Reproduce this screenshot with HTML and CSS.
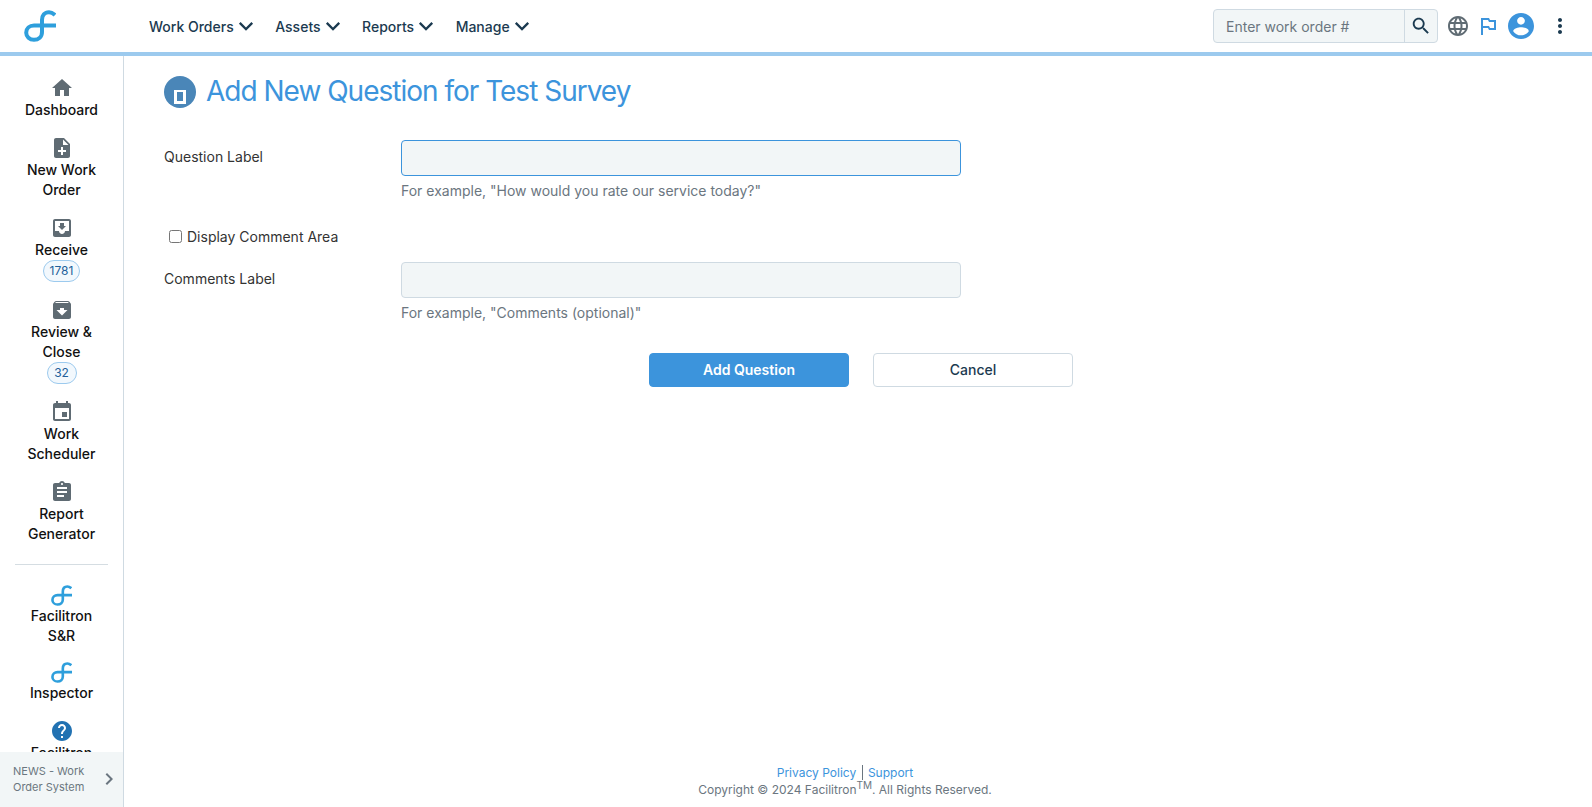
FILE: index.html
```html
<!DOCTYPE html>
<html lang="en">
<head>
    <meta charset="UTF-8">
    <title>Add New Question for Test Survey</title>
    <link rel="stylesheet" href="styles.css">
</head>
<body>
    <svg class="icon-defs" width="0" height="0">
        <symbol id="i-logo" viewBox="0 0 32 32">
            <path d="M31 5C29 3.200 27 2.200 25 2.200 20.500 2.200 18 5.500 18 10V22C18 27 14.500 29.800 10 29.800 5.500 29.800 2.200 26.500 2.200 22.700 2.200 18.500 5.500 15.500 10 15.500H32" fill="none" stroke="currentColor" stroke-width="4"/>
        </symbol>
        <symbol id="i-chevron-down" viewBox="3.500 3.500 17 17"><path d="M16.590 8.590L12 13.170 7.410 8.590 6 10l6 6 6-6z"/></symbol>
    </svg>

    <!-- Top Bar -->
    <header class="topbar">
        <a class="topbar-logo"><svg width="32" height="32"><use href="#i-logo"/></svg></a>
        <nav class="topnav">
            <a>Work Orders <svg class="caret" width="20" height="20"><use href="#i-chevron-down"/></svg></a>
            <a>Assets <svg class="caret" width="20" height="20"><use href="#i-chevron-down"/></svg></a>
            <a>Reports <svg class="caret" width="20" height="20"><use href="#i-chevron-down"/></svg></a>
            <a>Manage <svg class="caret" width="20" height="20"><use href="#i-chevron-down"/></svg></a>
        </nav>
        <div class="topbar-tools">
            <div class="search-box">
                <input type="text" placeholder="Enter work order #">
                <button type="button" aria-label="Search">
                    <svg width="22" height="22" viewBox="0 0 24 24"><path d="M15.500 14h-.79l-.28-.27C15.410 12.590 16 11.110 16 9.500 16 5.910 13.090 3 9.500 3S3 5.910 3 9.500 5.910 16 9.500 16c1.610 0 3.090-.59 4.230-1.570l.27.28v.79l5 4.990L20.490 19l-4.990-5zm-6 0C7.010 14 5 11.990 5 9.500S7.010 5 9.500 5 14 7.010 14 9.500 11.990 14 9.500 14z"/></svg>
                </button>
            </div>
            <svg class="tool-globe" width="24" height="24" viewBox="0 0 24 24"><path d="M11.990 2C6.470 2 2 6.480 2 12s4.470 10 9.990 10C17.520 22 22 17.520 22 12S17.520 2 11.990 2zm6.930 6h-2.950c-.32-1.250-.78-2.450-1.380-3.560 1.840.63 3.370 1.910 4.330 3.560zM12 4.040c.83 1.200 1.480 2.530 1.910 3.960h-3.820c.43-1.430 1.080-2.760 1.910-3.960zM4.260 14C4.100 13.360 4 12.690 4 12s.1-1.360.26-2h3.380c-.08.66-.14 1.320-.14 2 0 .68.06 1.340.14 2H4.260zm.82 2h2.950c.32 1.250.78 2.450 1.380 3.560-1.840-.63-3.370-1.900-4.330-3.560zm2.950-8H5.080c.96-1.660 2.490-2.930 4.330-3.560C8.810 5.550 8.350 6.750 8.030 8zM12 19.960c-.83-1.200-1.480-2.530-1.910-3.960h3.820c-.43 1.430-1.080 2.760-1.910 3.960zM14.340 14H9.660c-.09-.66-.16-1.320-.16-2 0-.68.07-1.350.16-2h4.680c.09.650.16 1.320.16 2 0 .68-.07 1.340-.16 2zm.25 5.560c.6-1.110 1.060-2.310 1.380-3.560h2.950c-.96 1.650-2.490 2.930-4.330 3.560zM16.360 14c.08-.66.14-1.320.14-2 0-.68-.06-1.340-.14-2h3.380c.16.64.26 1.310.26 2s-.1 1.360-.26 2h-3.380z"/></svg>
            <svg class="tool-flag" width="24" height="24" viewBox="0 0 24 24"><path d="M14 6l-1-2H5v17h2v-7h5l1 2h7V6h-6zm4 8h-4l-1-2H7V6h5l1 2h5v6z"/></svg>
            <svg class="tool-user" width="26" height="26" viewBox="2 2 20 20"><path d="M12 2C6.480 2 2 6.480 2 12s4.480 10 10 10 10-4.480 10-10S17.520 2 12 2zm0 3c1.660 0 3 1.340 3 3s-1.340 3-3 3-3-1.340-3-3 1.340-3 3-3zm0 14.200c-2.500 0-4.710-1.280-6-3.220.03-1.990 4-3.080 6-3.080 1.990 0 5.970 1.090 6 3.080-1.290 1.940-3.500 3.220-6 3.220z"/></svg>
            <svg class="tool-more" width="24" height="24" viewBox="0 0 24 24"><path d="M12 8c1.100 0 2-.9 2-2s-.9-2-2-2-2 .9-2 2 .9 2 2 2zm0 2c-1.100 0-2 .9-2 2s.9 2 2 2 2-.9 2-2-.9-2-2-2zm0 6c-1.100 0-2 .9-2 2s.9 2 2 2 2-.9 2-2-.9-2-2-2z"/></svg>
        </div>
    </header>

    <div class="layout">
        <!-- Side Menu -->
        <aside class="sidebar">
            <div class="side-scroll">
                <a class="side-item">
                    <svg width="24" height="24" viewBox="0 0 24 24"><path d="M10 20v-6h4v6h5v-8h3L12 3 2 12h3v8z"/></svg>
                    <span>Dashboard</span>
                </a>
                <a class="side-item">
                    <svg width="24" height="24" viewBox="0 0 24 24"><path d="M14 2H6c-1.100 0-1.990.9-1.990 2L4 20c0 1.100.89 2 1.990 2H18c1.100 0 2-.9 2-2V8l-6-6zm2 14h-3v3h-2v-3H8v-2h3v-3h2v3h3v2zm-3-7V3.500L18.500 9H13z"/></svg>
                    <span>New Work Order</span>
                </a>
                <a class="side-item">
                    <svg width="24" height="24" viewBox="0 0 24 24"><path d="M19 3H4.990c-1.110 0-1.980.89-1.980 2L3 19c0 1.100.88 2 1.990 2H19c1.100 0 2-.9 2-2V5c0-1.110-.9-2-2-2zm0 12h-4c0 1.660-1.350 3-3 3s-3-1.340-3-3H4.990V5H19v10zm-3-5h-2V7h-4v3H8l4 4 4-4z"/></svg>
                    <span>Receive</span>
                    <b class="count">1781</b>
                </a>
                <a class="side-item">
                    <svg width="24" height="24" viewBox="0 0 24 24"><path d="M20.540 5.230l-1.390-1.680C18.880 3.210 18.470 3 18 3H6c-.47 0-.88.21-1.160.55L3.460 5.230C3.170 5.570 3 6.020 3 6.500V19c0 1.100.9 2 2 2h14c1.100 0 2-.9 2-2V6.500c0-.48-.17-.93-.46-1.270zM12 17.500L6.500 12H10v-2h4v2h3.500L12 17.500zM5.120 5l.81-1h12l.94 1H5.120z"/></svg>
                    <span>Review &amp; Close</span>
                    <b class="count">32</b>
                </a>
                <a class="side-item">
                    <svg width="24" height="24" viewBox="0 0 24 24"><path d="M17 12h-5v5h5v-5zM16 1v2H8V1H6v2H5c-1.110 0-1.990.9-1.990 2L3 19c0 1.100.89 2 2 2h14c1.100 0 2-.9 2-2V5c0-1.100-.9-2-2-2h-1V1h-2zm3 18H5V8h14v11z"/></svg>
                    <span>Work Scheduler</span>
                </a>
                <a class="side-item">
                    <svg width="24" height="24" viewBox="0 0 24 24"><path d="M19 3h-4.180C14.400 1.840 13.300 1 12 1c-1.300 0-2.400.84-2.820 2H5c-1.100 0-2 .9-2 2v14c0 1.100.9 2 2 2h14c1.100 0 2-.9 2-2V5c0-1.100-.9-2-2-2zm-7 0c.55 0 1 .45 1 1s-.45 1-1 1-1-.45-1-1 .45-1 1-1zm2 14H7v-2h7v2zm3-4H7v-2h10v2zm0-4H7V7h10v2z"/></svg>
                    <span>Report Generator</span>
                </a>
                <hr class="side-divider">
                <a class="side-item app">
                    <svg width="21" height="21"><use href="#i-logo"/></svg>
                    <span>Facilitron S&amp;R</span>
                </a>
                <a class="side-item app">
                    <svg width="21" height="21"><use href="#i-logo"/></svg>
                    <span>Inspector</span>
                </a>
                <a class="side-item help">
                    <svg width="24" height="24" viewBox="0 0 24 24"><path d="M12 2C6.480 2 2 6.480 2 12s4.480 10 10 10 10-4.480 10-10S17.520 2 12 2zm1 17h-2v-2h2v2zm2.070-7.750l-.9.92C13.450 12.900 13 13.500 13 15h-2v-.5c0-1.100.45-2.100 1.170-2.830l1.240-1.260c.37-.36.59-.86.59-1.410 0-1.100-.9-2-2-2s-2 .9-2 2H8c0-2.210 1.790-4 4-4s4 1.790 4 4c0 .88-.36 1.680-.93 2.250z"/></svg>
                    <span>Facilitron</span>
                </a>
            </div>
            <div class="news-panel">
                <span>NEWS - Work Order System</span>
                <svg width="24" height="24" viewBox="0 0 24 24"><path d="M10 6L8.590 7.410 13.170 12l-4.580 4.590L10 18l6-6z"/></svg>
            </div>
        </aside>

        <!-- Main Content -->
        <main class="content">
            <h1 class="page-title">
                <span class="title-badge"><i></i></span>
                <span class="title-text">Add New Question for Test Survey</span>
            </h1>

            <form class="question-form">
                <div class="form-row">
                    <label for="questionLabel">Question Label</label>
                    <div class="field">
                        <input class="is-focus" id="questionLabel" type="text">
                        <p>For example, "How would you rate our service today?"</p>
                    </div>
                </div>
                <label class="check-row"><input type="checkbox"> Display Comment Area</label>
                <div class="form-row">
                    <label for="commentsLabel">Comments Label</label>
                    <div class="field">
                        <input id="commentsLabel" type="text">
                        <p>For example, "Comments (optional)"</p>
                    </div>
                </div>
                <div class="form-actions">
                    <button class="btn btn-primary" type="button">Add Question</button>
                    <button class="btn" type="button">Cancel</button>
                </div>
            </form>

            <footer class="page-footer">
                <div><a>Privacy Policy</a> <span class="sep"></span> <a>Support</a></div>
                <div class="copyright">Copyright © 2024 Facilitron<sup>TM</sup>. All Rights Reserved.</div>
            </footer>
        </main>
    </div>
</body>
</html>
```

FILE: styles.css
```css
:root {
    --color-blue: #3c94dc;
    --color-navy: #1b3a50;
    --color-icon: #5f6b73;
    --color-field: #f2f6f7;
    --color-line: #cfdae2;
    --color-muted: #6b7680;
}

* {
    box-sizing: border-box;
}

html, body {
    height: 100%;
}

body {
    margin: 0;
    display: flex;
    flex-direction: column;
    overflow: hidden;
    background: #fff;
    font-family: Inter, "Noto Sans", sans-serif;
    font-size: 14px;
    color: #333;
}

.icon-defs {
    position: absolute;
}

/* Top Bar */
.topbar {
    flex: none;
    height: 56px;
    display: flex;
    align-items: center;
    padding-left: 24px;
    border-bottom: 4px solid #9ccaee;
}

.topbar-logo {
    display: flex;
    color: #2e9fdc;
}

.topnav {
    display: flex;
    margin-left: 93px;
    gap: 19.5px;
}

.topnav a {
    display: flex;
    align-items: center;
    gap: 2px;
    font-weight: 450;
    color: var(--color-navy);
}

.caret {
    fill: var(--color-navy);
}

.topbar-tools {
    margin-left: auto;
    display: flex;
    align-items: center;
}

.search-box {
    display: flex;
    width: 225px;
    height: 34px;
    border: 1px solid var(--color-line);
    border-radius: 4px;
    background: var(--color-field);
}

.search-box input {
    flex: 1;
    min-width: 0;
    padding: 0 12px;
    border: 0;
    background: none;
    font: 14px Inter, sans-serif;
}

.search-box input::placeholder {
    color: var(--color-muted);
    opacity: 1;
}

.search-box button {
    width: 33px;
    padding: 0;
    display: flex;
    align-items: center;
    justify-content: center;
    border: 0;
    border-left: 1px solid var(--color-line);
    background: none;
    fill: var(--color-navy);
}

.tool-globe {
    margin-left: 8px;
    fill: var(--color-icon);
}

.tool-flag {
    margin-left: 6px;
    fill: var(--color-blue);
}

.tool-user {
    margin-left: 8px;
    fill: var(--color-blue);
}

.tool-more {
    margin: 0 20px 0 14px;
    fill: var(--color-navy);
}

/* Side Menu + Content */
.layout {
    flex: 1;
    min-height: 0;
    display: flex;
}

.sidebar {
    flex: none;
    width: 124px;
    display: flex;
    flex-direction: column;
    border-right: 1px solid var(--color-line);
}

.side-scroll {
    flex: 1;
    min-height: 0;
    overflow: hidden;
    padding-top: 20px;
}

.side-item {
    display: flex;
    flex-direction: column;
    align-items: center;
    margin-bottom: 16px;
    padding: 0 16px;
    text-align: center;
    font-weight: 450;
    line-height: 20px;
    color: #111;
    fill: var(--color-icon);
}

.side-item.app svg {
    color: #2e9fdc;
}

.side-item.help {
    fill: #2272b2;
}

.count {
    padding: 0 6px;
    min-width: 30px;
    border: 1px solid #9ccaee;
    border-radius: 11px;
    background: #f2f8fd;
    font-size: 12px;
    font-weight: 400;
    line-height: 20px;
    color: #22609a;
}

.side-divider {
    margin: 20px 15px 20px;
    border: 0;
    border-top: 1px solid #d5dde2;
}

.news-panel {
    flex: none;
    height: 55px;
    display: flex;
    align-items: center;
    padding: 0 2px 2px 13px;
    background: var(--color-field);
    font-size: 11px;
    line-height: 16px;
    color: var(--color-muted);
    fill: var(--color-muted);
}

.news-panel span {
    width: 78px;
}

.news-panel svg {
    flex: none;
    margin-left: auto;
}

.content {
    flex: 1;
    min-width: 0;
    display: flex;
    flex-direction: column;
    padding: 20px 34px 0 40px;
}

.page-title {
    margin: 0;
    display: flex;
    align-items: center;
    gap: 10px;
    height: 32px;
    font-size: 28px;
    font-weight: 400;
    letter-spacing: -1px;
    color: var(--color-blue);
}

.title-text {
    margin-bottom: 2px;
}

.title-badge {
    width: 32px;
    height: 32px;
    display: flex;
    align-items: flex-end;
    justify-content: center;
    padding-bottom: 4px;
    border-radius: 50%;
    background: #4a86b8;
}

.title-badge i {
    width: 12px;
    height: 14px;
    border: 3px solid #fff;
    border-top-width: 2px;
    background: #4a86b8;
}

/* Form */
.question-form {
    margin-top: 32px;
}

.form-row {
    display: flex;
}

.form-row > label {
    width: 237px;
    padding-top: 7px;
    line-height: 20px;
}

.field input {
    display: block;
    width: 560px;
    height: 36px;
    border: 1px solid var(--color-line);
    border-radius: 4px;
    background: var(--color-field);
    outline: none;
}

.field input.is-focus {
    border-color: var(--color-blue);
}

.field p {
    margin: 5px 0 0;
    line-height: 20px;
    color: var(--color-muted);
}

.check-row {
    display: flex;
    align-items: center;
    gap: 5px;
    height: 20px;
    margin: 25px 0 16px 5px;
}

.check-row input {
    margin: 0;
    width: 13px;
    height: 13px;
}

.form-actions {
    display: flex;
    justify-content: center;
    gap: 24px;
    margin-top: 30px;
}

.btn {
    width: 200px;
    height: 34px;
    padding: 0 0 2px;
    border: 1px solid var(--color-line);
    border-radius: 4px;
    background: #fff;
    font: 500 14px Inter, sans-serif;
    color: var(--color-navy);
}

.btn-primary {
    border-color: var(--color-blue);
    background: var(--color-blue);
    font-weight: 600;
    color: #fff;
}

/* Footer */
.page-footer {
    margin: auto 32px 0 0;
    height: 43px;
    text-align: center;
    font-size: 12px;
    line-height: 17px;
    color: var(--color-blue);
}

.sep {
    display: inline-block;
    width: 1px;
    height: 15px;
    margin: 0 2px;
    background: var(--color-muted);
    vertical-align: -3px;
}

.copyright {
    color: var(--color-muted);
}

.copyright sup {
    font-size: 10px;
    line-height: 0;
}
```
